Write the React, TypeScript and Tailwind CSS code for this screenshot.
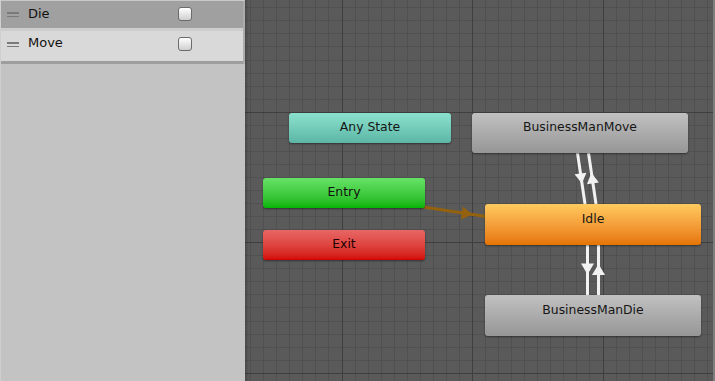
import React from "react";

const MINOR = 13.05;
const X0 = 96.5; // canvas-relative major vertical line
const Y0 = 111.7; // major horizontal line
const CW = 470;
const CH = 381;

function Grid() {
  const minor: React.ReactNode[] = [];
  const major: React.ReactNode[] = [];
  for (let k = -10; k < 40; k++) {
    const x = X0 + k * MINOR;
    if (x < 0 || x > CW) continue;
    const px = Math.round(x) + 0.5;
    if (k % 10 === 0) {
      major.push(<line key={"vx" + k} x1={px} y1={0} x2={px} y2={CH} stroke="#3f3f3f" strokeWidth={1} />);
    } else {
      minor.push(<line key={"vx" + k} x1={px} y1={0} x2={px} y2={CH} stroke="#505050" strokeWidth={1} />);
    }
  }
  for (let k = -10; k < 40; k++) {
    const y = Y0 + k * MINOR;
    if (y < 0 || y > CH) continue;
    const py = Math.round(y) + 0.5;
    if (k % 10 === 0) {
      major.push(<line key={"hy" + k} x1={0} y1={py} x2={CW} y2={py} stroke="#3f3f3f" strokeWidth={1} />);
    } else {
      minor.push(<line key={"hy" + k} x1={0} y1={py} x2={CW} y2={py} stroke="#505050" strokeWidth={1} />);
    }
  }
  return (
    <svg className="absolute inset-0" width={CW} height={CH}>
      {minor}
      {major}
    </svg>
  );
}

function arrowPts(tx: number, ty: number, bx: number, by: number, hw: number) {
  const dx = tx - bx;
  const dy = ty - by;
  const len = Math.hypot(dx, dy);
  const px = (-dy / len) * hw;
  const py = (dx / len) * hw;
  return `${tx},${ty} ${bx + px},${by + py} ${bx - px},${by - py}`;
}

function Transitions() {
  const white = "#f2f2f2";
  return (
    <svg className="absolute inset-0" width={CW} height={CH}>
      {/* Entry -> Idle */}
      <line x1={178} y1={207} x2={241} y2={216.6} stroke="#94620e" strokeWidth={3} />
      <polygon points={arrowPts(227.5, 214.6, 216.8, 213, 6.5)} fill="#94620e" />
      {/* Move <-> Idle */}
      <line x1={332.5} y1={153} x2={340} y2={204} stroke={white} strokeWidth={3} />
      <polygon points={arrowPts(336.9, 183.5, 335.5, 173.5, 6)} fill={white} />
      <line x1={343.5} y1={153} x2={351} y2={204} stroke={white} strokeWidth={3} />
      <polygon points={arrowPts(346.4, 172.7, 347.9, 183.3, 6)} fill={white} />
      {/* Idle <-> Die */}
      <line x1={342.5} y1={245} x2={342.5} y2={295} stroke={white} strokeWidth={3} />
      <polygon points={arrowPts(342.5, 274.5, 342.5, 263.5, 6.5)} fill={white} />
      <line x1={353.5} y1={245} x2={353.5} y2={295} stroke={white} strokeWidth={3} />
      <polygon points={arrowPts(353.5, 264, 353.5, 275, 6.5)} fill={white} />
    </svg>
  );
}

function Checkbox() {
  return (
    <div className="w-[14px] h-[14px] rounded-[3px] border border-[#6b6b6b] bg-gradient-to-b from-[#ffffff] to-[#cfcfcf] shadow-[inset_0_1px_0_rgba(255,255,255,0.9)]" />
  );
}

function Handle() {
  return (
    <div className="flex flex-col gap-[2px] w-[12px] mt-[11px]">
      <div className="h-[1.5px] bg-[#7a7a7a]" />
      <div className="h-[1.5px] bg-[#7a7a7a]" />
    </div>
  );
}

const font = { fontFamily: '"DejaVu Sans", Verdana, sans-serif' };

export default function App() {
  return (
    <div className="w-[715px] h-[381px] flex overflow-hidden" style={font}>
      {/* Left panel */}
      <div className="w-[245px] h-full bg-[#c3c3c3] flex flex-col shrink-0 border-l border-[#cfcfcf]">
        <div className="h-[1px] bg-[#c9c9c9] w-[243px]" />
        <div className="flex">
          <div className="w-[242px] flex flex-col">
            <div className="h-[27px] bg-[#a0a0a0] flex items-start pl-[6px]">
              <Handle />
              <span className="ml-[9px] mt-[5px] text-[13px] leading-[16px] text-[#111]">Die</span>
              <div className="ml-auto mr-[51px] mt-[6px]">
                <Checkbox />
              </div>
            </div>
            <div className="h-[3px] bg-[#cdcdcd]" />
            <div className="h-[30px] bg-[#d9d9d9] flex items-start pl-[6px]">
              <Handle />
              <span className="ml-[9px] mt-[4px] text-[13px] leading-[16px] text-[#111]">Move</span>
              <div className="ml-auto mr-[51px] mt-[6px]">
                <Checkbox />
              </div>
            </div>
            <div className="h-[3px] bg-[#9e9e9e]" />
          </div>
          <div className="w-[2px] bg-[#acacac]" />
        </div>
      </div>

      {/* Canvas */}
      <div className="relative flex-1 h-full bg-[#5a5a5a] overflow-hidden">
        <Grid />
        <div className="absolute left-0 top-0 h-full w-[4px] bg-gradient-to-r from-[rgba(0,0,0,0.18)] to-transparent" />
        <Transitions />

        <div className="absolute left-[44px] top-[113px] w-[162px] h-[30px] rounded-[3px] bg-gradient-to-b from-[#8ae1cd] to-[#5db6a6] shadow-[0_1px_2px_rgba(0,0,0,0.45)] text-center pt-[6px] text-[12.4px] leading-[16px] text-[#161616]">
          Any State
        </div>
        <div className="absolute left-[18px] top-[178px] w-[162px] h-[30px] rounded-[3px] bg-gradient-to-b from-[#66e266] to-[#00b500] shadow-[0_1px_2px_rgba(0,0,0,0.45)] text-center pt-[6px] text-[12.4px] leading-[16px] text-[#111]">
          Entry
        </div>
        <div className="absolute left-[18px] top-[230px] w-[162px] h-[30px] rounded-[3px] bg-gradient-to-b from-[#e76666] to-[#d40000] shadow-[0_1px_2px_rgba(0,0,0,0.45)] text-center pt-[6px] text-[12.4px] leading-[16px] text-[#1a0000]">
          Exit
        </div>
        <div className="absolute left-[227px] top-[113px] w-[216px] h-[40px] rounded-[3px] bg-gradient-to-b from-[#c1c1c1] to-[#969696] shadow-[0_1px_2px_rgba(0,0,0,0.45)] text-center pt-[6px] text-[12.4px] leading-[16px] text-[#161616]">
          BusinessManMove
        </div>
        <div className="absolute left-[240px] top-[204px] w-[216px] h-[41px] rounded-[3px] bg-gradient-to-b from-[#ffca5e] to-[#e67400] shadow-[0_1px_2px_rgba(0,0,0,0.45)] text-center pt-[7px] text-[12.4px] leading-[16px] text-[#161616]">
          Idle
        </div>
        <div className="absolute left-[240px] top-[295px] w-[216px] h-[41px] rounded-[3px] bg-gradient-to-b from-[#c1c1c1] to-[#969696] shadow-[0_1px_2px_rgba(0,0,0,0.45)] text-center pt-[7px] text-[12.4px] leading-[16px] text-[#161616]">
          BusinessManDie
        </div>

        <div className="absolute right-0 top-0 h-full w-[2px] bg-[#7e7e7e]" />
      </div>
    </div>
  );
}
